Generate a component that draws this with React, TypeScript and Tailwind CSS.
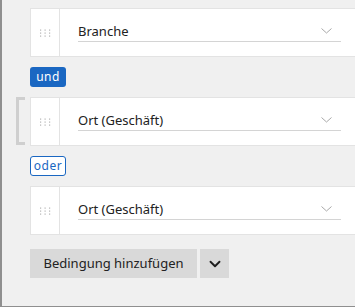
import { ChevronDown } from 'lucide-react';

function Handle() {
  return (
    <div className="flex w-[29px] shrink-0 items-center justify-center border-r border-[#e3e3e3]">
      <svg width="12" height="8" viewBox="0 0 12 8">
        {[0, 1, 2].map((r) =>
          [0, 1, 2].map((c) => (
            <rect key={`${r}-${c}`} x={1 + c * 4.5} y={0.5 + r * 3} width="1.2" height="1.2" fill="#b4b4b4" />
          ))
        )}
      </svg>
    </div>
  );
}

function ConditionRow({ label }: { label: string }) {
  return (
    <div className="flex h-[49px] border-y border-l border-[#e3e3e3] bg-white">
      <Handle />
      <div className="flex-1 pl-[18px] pr-[14px] pt-[13px]">
        <div className="flex h-[20px] items-center justify-between border-b border-[#d4d4d4]">
          <span className="text-[13px] leading-none text-[#222]">{label}</span>
          <svg width="11" height="6" viewBox="0 0 11 6" className="mr-[9px] -mt-[2px]">
            <path d="M0.5 0.5 L5.5 5 L10.5 0.5" fill="none" stroke="#a8a8a8" strokeWidth="1" />
          </svg>
        </div>
      </div>
    </div>
  );
}

export default function App() {
  return (
    <div
      className="h-[307px] w-[355px] overflow-hidden border-b border-l-2 border-[#8f8f8f] bg-[#f0f0f0]"
      style={{ fontFamily: '"Noto Sans", "Open Sans", sans-serif' }}
    >
      <div className="flex flex-col pl-[28px] pt-[8px]">
        <ConditionRow label="Branche" />

        <div className="flex py-[10px]">
          <span className="flex h-[20px] w-[36px] items-center justify-center rounded-[3px] bg-[#1a67c2] text-[12px] leading-none tracking-[0.5px] text-white">
            und
          </span>
        </div>

        <div className="relative">
          <div className="absolute -left-[14px] top-0 h-[48px] w-[9px] border-y-[3px] border-l-[3px] border-[#cfcfcf]" />
          <ConditionRow label="Ort (Geschäft)" />
        </div>

        <div className="flex py-[10px]">
          <span className="flex h-[20px] w-[36px] items-center justify-center rounded-[3px] border border-[#1a67c2] bg-white text-[12px] leading-none tracking-[0.5px] text-[#1a67c2]">
            oder
          </span>
        </div>

        <ConditionRow label="Ort (Geschäft)" />

        <div className="mt-[14px] flex gap-[3px]">
          <button className="h-[29px] w-[167px] bg-[#d9d9d9] text-[13px] text-[#222]">
            Bedingung hinzufügen
          </button>
          <button className="flex h-[29px] w-[29px] items-center justify-center bg-[#d9d9d9]">
            <ChevronDown className="h-[18px] w-[18px] text-[#1e1e1e]" strokeWidth={2.5} />
          </button>
        </div>
      </div>
    </div>
  );
}
